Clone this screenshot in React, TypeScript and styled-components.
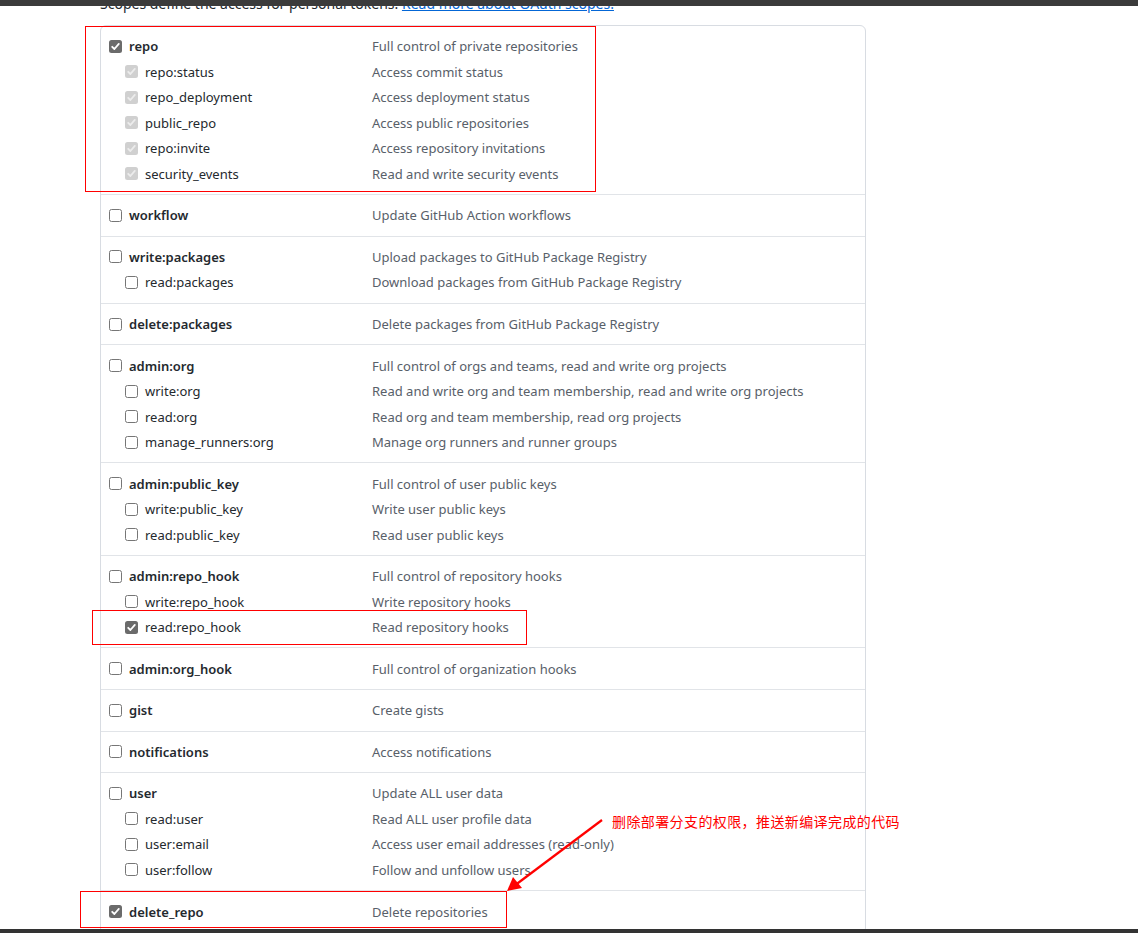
import React from "react";
import styled, { createGlobalStyle, css } from "styled-components";

type BoxState = "checked" | "disabled" | "empty";

type Scope = {
  name: string;
  desc: string;
  state?: BoxState;
  children?: { name: string; desc: string; state?: BoxState }[];
};

const scopes: Scope[] = [
  {
    name: "repo",
    desc: "Full control of private repositories",
    state: "checked",
    children: [
      { name: "repo:status", desc: "Access commit status", state: "disabled" },
      { name: "repo_deployment", desc: "Access deployment status", state: "disabled" },
      { name: "public_repo", desc: "Access public repositories", state: "disabled" },
      { name: "repo:invite", desc: "Access repository invitations", state: "disabled" },
      { name: "security_events", desc: "Read and write security events", state: "disabled" },
    ],
  },
  { name: "workflow", desc: "Update GitHub Action workflows" },
  {
    name: "write:packages",
    desc: "Upload packages to GitHub Package Registry",
    children: [{ name: "read:packages", desc: "Download packages from GitHub Package Registry" }],
  },
  { name: "delete:packages", desc: "Delete packages from GitHub Package Registry" },
  {
    name: "admin:org",
    desc: "Full control of orgs and teams, read and write org projects",
    children: [
      { name: "write:org", desc: "Read and write org and team membership, read and write org projects" },
      { name: "read:org", desc: "Read org and team membership, read org projects" },
      { name: "manage_runners:org", desc: "Manage org runners and runner groups" },
    ],
  },
  {
    name: "admin:public_key",
    desc: "Full control of user public keys",
    children: [
      { name: "write:public_key", desc: "Write user public keys" },
      { name: "read:public_key", desc: "Read user public keys" },
    ],
  },
  {
    name: "admin:repo_hook",
    desc: "Full control of repository hooks",
    children: [
      { name: "write:repo_hook", desc: "Write repository hooks" },
      { name: "read:repo_hook", desc: "Read repository hooks", state: "checked" },
    ],
  },
  { name: "admin:org_hook", desc: "Full control of organization hooks" },
  { name: "gist", desc: "Create gists" },
  { name: "notifications", desc: "Access notifications" },
  {
    name: "user",
    desc: "Update ALL user data",
    children: [
      { name: "read:user", desc: "Read ALL user profile data" },
      { name: "user:email", desc: "Access user email addresses (read-only)" },
      { name: "user:follow", desc: "Follow and unfollow users" },
    ],
  },
  { name: "delete_repo", desc: "Delete repositories", state: "checked" },
];

// 红框标注，按截图坐标
const marks = [
  { x: 85, y: 26, w: 511, h: 166 },
  { x: 92, y: 610, w: 435, h: 35 },
  { x: 80, y: 891, w: 427, h: 37 },
];

const CheckBox: React.FC<{ state: BoxState }> = ({ state }) => (
  <Box $state={state}>
    {state !== "empty" && (
      <svg width="11" height="11" viewBox="0 0 11 11">
        <path
          d="M2.2 5.8 L4.4 8 L8.8 2.9"
          fill="none"
          stroke={state === "checked" ? "#fff" : "#ececec"}
          strokeWidth="1.8"
          strokeLinecap="round"
          strokeLinejoin="round"
        />
      </svg>
    )}
  </Box>
);

const App: React.FC = () => {
  return (
    <Page>
      <GlobalStyle />
      <TopBar />
      <Viewport>
        <Content>
          <Intro>
            Scopes define the access for personal tokens. <a href="#">Read more about OAuth scopes.</a>
          </Intro>
          <ScopeBox>
            {scopes.map((s) => (
              <Group key={s.name}>
                <Row>
                  <Name $child={false}>
                    <CheckBox state={s.state ?? "empty"} />
                    {s.name}
                  </Name>
                  <Desc>{s.desc}</Desc>
                </Row>
                {s.children?.map((c) => (
                  <Row key={c.name}>
                    <Name $child>
                      <CheckBox state={c.state ?? "empty"} />
                      {c.name}
                    </Name>
                    <Desc>{c.desc}</Desc>
                  </Row>
                ))}
              </Group>
            ))}
          </ScopeBox>
        </Content>
      </Viewport>
      <BottomBar />

      {marks.map((m, i) => (
        <Mark key={i} style={{ left: m.x, top: m.y, width: m.w, height: m.h }} />
      ))}
      <Note>删除部署分支的权限，推送新编译完成的代码</Note>
      <Arrow width="120" height="90" viewBox="0 0 120 90">
        <line x1="102" y1="7" x2="14" y2="73" stroke="#f00" strokeWidth="2.2" />
        <polygon points="7,78 13,64 22,75" fill="#f00" />
      </Arrow>
    </Page>
  );
};

export default App;

const GlobalStyle = createGlobalStyle`
  body {
    margin: 0;
    background: #fff;
    font-family: "Noto Sans", "Open Sans", sans-serif;
  }
`;

const Page = styled.div`
  position: relative;
  width: 1138px;
  height: 933px;
  display: flex;
  flex-direction: column;
  overflow: hidden;
  background: #fff;
`;

const TopBar = styled.div`
  height: 6px;
  flex: none;
  background: #3b3b3b;
`;

const BottomBar = styled.div`
  height: 4px;
  flex: none;
  background: #333;
`;

const Viewport = styled.div`
  flex: 1;
  overflow: hidden;
`;

const Content = styled.div`
  margin-top: -12px;
  padding-left: 100px;
`;

const Intro = styled.p`
  margin: 0;
  font-size: 14px;
  line-height: 20px;
  color: #24292e;

  a {
    color: #0366d6;
    text-decoration: underline;
  }
`;

const ScopeBox = styled.div`
  width: 764px;
  margin-top: 11px;
  border: 1px solid #d8dce2;
  border-radius: 6px;
`;

const Group = styled.div`
  padding: 7.6px 0 7.47px;
  border-bottom: 1px solid #e1e4e8;
`;

const Row = styled.div`
  display: grid;
  grid-template-columns: 271px 1fr;
  align-items: center;
  height: 25.5px;
  font-size: 13px;
`;

const Name = styled.div<{ $child: boolean }>`
  display: flex;
  align-items: center;
  gap: 7px;
  color: #24292e;
  ${({ $child }) =>
    $child
      ? css`
          padding-left: 24px;
          font-weight: 400;
        `
      : css`
          padding-left: 8px;
          font-weight: 600;
        `}
`;

const Desc = styled.div`
  color: #586069;
`;

const Box = styled.span<{ $state: BoxState }>`
  width: 13px;
  height: 13px;
  flex: none;
  box-sizing: border-box;
  border-radius: 2.5px;
  display: flex;
  align-items: center;
  justify-content: center;
  ${({ $state }) =>
    $state === "checked"
      ? css`
          background: #6b6b6b;
        `
      : $state === "disabled"
      ? css`
          background: #d0d0d0;
        `
      : css`
          background: #fff;
          border: 1px solid #767676;
        `}
`;

const Mark = styled.div`
  position: absolute;
  box-sizing: border-box;
  border: 1px solid #f00;
  pointer-events: none;
`;

const Note = styled.div`
  position: absolute;
  left: 612px;
  top: 811px;
  font-family: "Noto Sans CJK SC", sans-serif;
  font-size: 14px;
  line-height: 20px;
  letter-spacing: 0.4px;
  color: #f00;
  white-space: nowrap;
`;

const Arrow = styled.svg`
  position: absolute;
  left: 500px;
  top: 813px;
`;
